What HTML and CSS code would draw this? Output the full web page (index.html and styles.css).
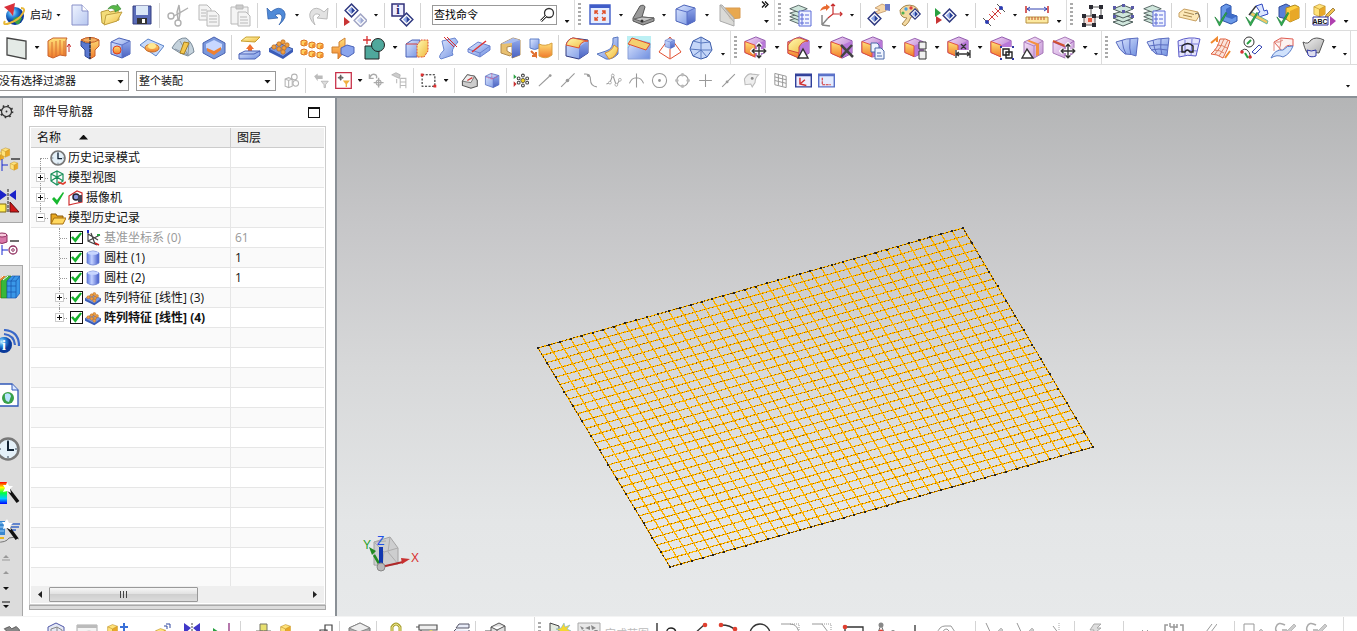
FILE: index.html
```html
<!DOCTYPE html>
<html lang="zh-CN">
<head>
<meta charset="utf-8">
<title>部件导航器</title>
<link rel="stylesheet" href="styles.css">
</head>
<body>
<svg class="sprite" aria-hidden="true">
<defs>
<linearGradient id="gb" x2="1" y2="1"><stop stop-color="#dfe8ff"/><stop offset="1" stop-color="#6f8fe0"/></linearGradient>
<linearGradient id="gd" x2="0" y2="1"><stop stop-color="#8fa6ea"/><stop offset="1" stop-color="#4a62c0"/></linearGradient>
<linearGradient id="go" x2="0" y2="1"><stop stop-color="#ffe27a"/><stop offset="1" stop-color="#f07a2a"/></linearGradient>
<linearGradient id="gy" x2="1" y2="1"><stop stop-color="#fffbb0"/><stop offset="1" stop-color="#f0b840"/></linearGradient>
<linearGradient id="gg" x2="1" y2="1"><stop stop-color="#f4f4f4"/><stop offset="1" stop-color="#a8a8a8"/></linearGradient>
<linearGradient id="gp" x2="1" y2="1"><stop stop-color="#f6dcf8"/><stop offset="1" stop-color="#a868c4"/></linearGradient>
<linearGradient id="gc" x2="1"><stop stop-color="#5a78e0"/><stop offset=".4" stop-color="#c4d2ff"/><stop offset="1" stop-color="#4058c8"/></linearGradient>
<linearGradient id="gr" x2="0" y2="1"><stop stop-color="#f00"/><stop offset=".25" stop-color="#ff0"/><stop offset=".5" stop-color="#0f4"/><stop offset=".75" stop-color="#0cf"/><stop offset="1" stop-color="#00f"/></linearGradient>
<radialGradient id="gl" cx=".35" cy=".3"><stop stop-color="#c8f0ff"/><stop offset=".5" stop-color="#2f8fe0"/><stop offset="1" stop-color="#0a3a9a"/></radialGradient>
</defs>
<symbol id="logo" viewBox="0 0 24 24"><circle cx="13" cy="13" r="9" fill="url(#gl)"/><path d="M11 16q5-4 9-1l-3 6q-4 1-6-5z" fill="#3aa048"/><path d="M3 18q-3 5 5 2 9-3 13-10 3-5-2-5" fill="none" stroke="#e8b838" stroke-width="2"/><path d="M2 4l11-4-2 13-3-4z" fill="#d8303a"/></symbol>
<symbol id="new" viewBox="0 0 24 24"><path d="M4 2h10l6 6v14H4z" fill="url(#gb)" fill-opacity=".5" stroke="#8890c8"/><path d="M14 2v6h6" fill="#fff" stroke="#8890c8"/></symbol>
<symbol id="open" viewBox="0 0 24 24"><path d="M2 9l7-2 2 2 8-2 1 10-14 4-3-1z" fill="#f3dc78" stroke="#b89a3a"/><path d="M7 12l16-3-5 9-13 4z" fill="url(#gy)" stroke="#c0a040"/><path d="M9 6q3-5 9-3V1l4 5-6 3V7q-3-3-7-1z" fill="#58b848" stroke="#2f8030" stroke-width=".6"/></symbol>
<symbol id="save" viewBox="0 0 24 24"><path d="M3 3h18v18H3z" fill="#5a6cb8" stroke="#343f80"/><path d="M6 3h12v9H6z" fill="#dbe8f8"/><path d="M7 15h10v6H7z" fill="#333"/><path d="M12 16h3v4h-3z" fill="#fff"/></symbol>
<symbol id="cut" viewBox="0 0 24 24"><g fill="none" stroke="#b0b0b0" stroke-width="1.4"><circle cx="5" cy="13" r="3"/><circle cx="12" cy="20" r="3"/><path d="M8 13l14-8-10 6M12 17l-1-8 2-7 1 8-1 7" fill="#eee"/></g></symbol>
<symbol id="copy" viewBox="0 0 24 24"><g fill="#f4f4f4" stroke="#b8b8b8"><path d="M2 2h8l4 4v11H2z"/><path d="M10 8h8l4 4v11H10z"/><path d="M4 7h6M4 10h5M4 13h5M12 13h8M12 16h8M12 19h8"/></g></symbol>
<symbol id="paste" viewBox="0 0 24 24"><g fill="#f4f4f4" stroke="#b8b8b8"><path d="M3 4h17v17H3z"/><path d="M8 2h7v4H8z" fill="#ccc"/><path d="M10 9h8l4 4v10H10zM12 14h7M12 17h8M12 20h8"/></g></symbol>
<symbol id="undo" viewBox="0 0 24 24"><path d="M3 5l1 11 10-1-3-3q6-3 7 2 0 4-3 8 9-8 5-14-5-6-13 1z" fill="#4f8ad8" stroke="#2a5aa8" stroke-width=".7"/></symbol>
<symbol id="redo" viewBox="0 0 24 24"><path d="M21 5l-1 11-10-1 3-3q-5-3-7 2 0 4 2 8-8-8-4-14 5-6 13 1z" fill="#e2e2e2" stroke="#bbb"/></symbol>
<symbol id="dia" viewBox="0 0 24 24"><path d="M12 3l9 9-9 9-9-9z" fill="#fff" stroke="#303a80" stroke-width="2"/><path d="M12 7v10l-5-5z" fill="#8fa8e8"/><path d="M12 7v10l5-5z" fill="#27409a"/></symbol>
<symbol id="diad" viewBox="0 0 24 24"><use href="#dia" x="0" y="-1" width="17" height="17"/><use href="#dia" x="9" y="9" width="17" height="17" opacity=".45"/><path d="M1 14v9l6-4z" fill="#c83434"/></symbol>
<symbol id="info" viewBox="0 0 24 24"><path d="M1 1h12v12H1z" fill="#eef" stroke="#30307a" stroke-width="1.5"/><use href="#dia" x="7" y="8" width="17" height="17"/></symbol>
<symbol id="fit" viewBox="0 0 24 24"><path d="M2 2h20v19H2z" fill="#e4ecff" stroke="#3f5cc8" stroke-width="1.4"/><path d="M2 2h20v3H2z" fill="#3f5cc8"/><path d="M10 11L7 8m0 3V8h3M14 11l3-3m-3 0h3v3M10 14l-3 3m0-3v3h3M14 14l3 3m0-3v3h-3" stroke="#e0502a" stroke-width="1.4" fill="none"/></symbol>
<symbol id="seat" viewBox="0 0 24 24"><path d="M2 15L9 3q4-2 5 1l-3 10 12 1v3l-11 4-10-4z" fill="#9a9a9a" stroke="#555"/><path d="M11 14l12 1-11 4-9-3z" fill="#c8c8c8" stroke="#666"/><circle cx="11" cy="18" r="1.5" fill="#333"/></symbol>
<symbol id="cubeb" viewBox="0 0 24 24"><path d="M2 6l8-4 11 3v13l-8 4-11-4z" fill="url(#gb)" stroke="#4a62b8"/><path d="M13 9l8-4v13l-8 4z" fill="url(#gd)"/><path d="M2 6l11 3v13M13 9l8-4" stroke="#5a70c8" fill="none"/></symbol>
<symbol id="sect" viewBox="0 0 24 24"><path d="M8 5h15v10l-10 1z" fill="#e8a850" stroke="#d89a50"/><path d="M3 2l2 0 12 13v8L3 18z" fill="#d4d4d0" fill-opacity=".85" stroke="#aaa"/><path d="M3 2l14 17" stroke="#aaa"/></symbol>
<symbol id="layers" viewBox="0 0 24 24"><g fill="#cfe6dc" stroke="#4a5a58"><path d="M2 19l10-3 10 3-10 4z"/><path d="M2 15l10-3 10 3-10 4z"/><path d="M2 11l10-3 10 3-10 4z"/><path d="M2 6l10-4 10 4-10 4z"/></g></symbol>
<symbol id="layset" viewBox="0 0 24 24"><use href="#layers" width="21" height="22"/><path d="M11 8h12v15H11z" fill="#f0f4ff" stroke="#5a6ad8"/><path d="M13 11h2v2h-2zM13 15h2v2h-2zM13 19h2v2h-2zM17 12h4M17 16h4M17 20h4" fill="none" stroke="#5a6ad8"/></symbol>
<symbol id="laysel" viewBox="0 0 24 24"><use href="#layers" width="24" height="24"/><path d="M2 3h3v3H2zM11 1h3v3h-3zM20 3h3v3h-3zM2 12h3v3H2zM20 12h3v3h-3zM11 7h3v3h-3z" fill="#5a5aa8"/></symbol>
<symbol id="csys" viewBox="0 0 24 24"><path d="M3 22V12M3 22l8 1M3 22l6-7" stroke="#888" stroke-width="1.5" fill="none"/><path d="M14 11V1M14 11h9M14 11l-5 4M12 3l2-2 2 2M21 9l2 2-2 2" stroke="#c83030" stroke-width="1.2" fill="none"/><path d="M1 8q2-5 6-5V1l4 3-4 4V6q-3 0-6 2z" fill="#e86a30"/></symbol>
<symbol id="handd" viewBox="0 0 24 24"><path d="M8 5l7-4 5 2-1 5-9 3-2-2 5-2z" fill="#f8d8a8" stroke="#b88a58" stroke-width=".7"/><path d="M18 1l5 0v7l-5-1z" fill="#6a7ac8"/><use href="#dia" x="-1" y="7" width="17" height="17"/></symbol>
<symbol id="pal" viewBox="0 0 24 24"><path d="M2 7q5-7 14-4 6 3 4 10l-7 1q-2 6-6 9l-3-2 5-6q-7 0-7-8z" fill="#f3d9a0" stroke="#a88850"/><circle cx="8" cy="6" r="1.7" fill="#4aa0e0"/><circle cx="13" cy="5" r="1.7" fill="#e04040"/><circle cx="5" cy="10" r="1.6" fill="#50b050"/><use href="#dia" x="10" y="4" width="14" height="14"/></symbol>
<symbol id="rgd" viewBox="0 0 24 24"><path d="M1 5v9l6-4z" fill="#28a040"/><path d="M2 13v8l6-4z" fill="#c83434"/><use href="#dia" x="7" y="4" width="17" height="17"/></symbol>
<symbol id="dist" viewBox="0 0 24 24"><path d="M4 20L20 4" stroke="#c83030"/><path d="M1 15l8 8M15 1l8 8" stroke="#555"/><path d="M7 11l6 6M10 8l6 6M13 5l6 6" stroke="#d85050"/><circle cx="5" cy="19" r="2" fill="#2a3ab0"/><circle cx="19" cy="5" r="2" fill="#2a3ab0"/></symbol>
<symbol id="ruler" viewBox="0 0 24 24"><path d="M1 3v7M23 3v7" stroke="#c83030" stroke-width="1.5"/><path d="M2 6h20M5 4L2 6l3 2M19 4l3 2-3 2" stroke="#3040b0" fill="none"/><path d="M1 14h22v6H1z" fill="#fce9a0" stroke="#b89040"/><path d="M4 14v3M7 14v3M10 14v3M13 14v3M16 14v3M19 14v3" stroke="#c05030"/></symbol>
<symbol id="nodes" viewBox="0 0 24 24"><path d="M11 4h10v10H11z" fill="none" stroke="#555"/><path d="M4 13h11v9H4z" fill="#f6e0dc" stroke="#555"/><path d="M8 15h4v4H8z" fill="#e85a40"/><path d="M9 2h4v4H9zM19 2h4v4h-4zM19 12h4v4h-4zM2 11h4v4H2zM2 20h4v4H2zM12 20h4v4h-4zM12 11h4v4h-4z" fill="#2a2a32"/></symbol>
<symbol id="tag" viewBox="0 0 24 24"><path d="M1 10l5-4 14 3 1 4-3 5-17-4z" fill="#fce8b8" stroke="#c8a060"/><path d="M6 9l10 2.500M5 12l9 2" stroke="#a88850"/><path d="M17 11q5-4 5 8" stroke="#444" fill="none" stroke-width=".8"/></symbol>
<symbol id="chk" viewBox="0 0 24 24"><path d="M1 13l5 6L13 8l1 1-8 14z" fill="#2fb050" stroke="#1f8038" stroke-width=".8"/></symbol>
<symbol id="okb" viewBox="0 0 24 24"><path d="M7 4l5-3 5 2v8l6 2v5l-6 3-10-4z" fill="#6a98e8" stroke="#2850a8"/><path d="M12 6l5-3v8l6 2-5 3-6-2z" fill="#3f6cc8"/><use href="#chk" y="2" width="22" height="22"/></symbol>
<symbol id="okc" viewBox="0 0 24 24"><path d="M11 3l6-2 2 7 3-1 1 4-9 3-1-4 2-1z" fill="#dce6ff" stroke="#3048c0"/><path d="M7 9l16 9-1 3-17-9z" fill="#f0c860" stroke="#50b0a0" stroke-width=".8"/><path d="M4 12l7-9" stroke="#333" stroke-width="1.4"/><use href="#chk" y="2" width="22" height="22"/></symbol>
<symbol id="oky" viewBox="0 0 24 24"><path d="M3 4l7-3 4 2v14l-11-3z" fill="#5a80d8" stroke="#304a98"/><path d="M10 5l9-3 4 2v11l-9 4-4-3z" fill="#ffd040" stroke="#b08820"/><path d="M14 8l9-4v11l-9 4z" fill="#e8a828"/><use href="#chk" y="2" width="22" height="22"/></symbol>
<symbol id="abc" viewBox="0 0 24 24"><use href="#ycube" x="0" y="0" width="15" height="15"/><path d="M14 12l7-7 2 2-7 7-3 1z" fill="#f0c050" stroke="#806020" stroke-width=".7"/><path d="M1 14h15v8H1z" fill="#fff" stroke="#3030a0"/><path d="M18 13v10l6-5z" fill="#b040b0"/></symbol>
<symbol id="ycube" viewBox="0 0 24 24"><path d="M3 6l9-4 9 3v13l-9 4-9-4z" fill="#ffe27a" stroke="#b88a20"/><path d="M12 10l9-5v13l-9 4z" fill="#e8a828"/><path d="M3 6l9 4 9-5M12 10v12" fill="none" stroke="#b88a20"/></symbol>
<symbol id="sketch" viewBox="0 0 24 24"><path d="M3 2l19 3v18L3 19z" fill="#e4eae6" stroke="#444" stroke-width="1.3"/></symbol>
<symbol id="extr" viewBox="0 0 24 24"><path d="M1 5l5-3h14l-1 2v16l-6-1-7 3-5-2z" fill="url(#go)" stroke="#c8602a"/><path d="M5 6v15M9 5v15M13 4v15M17 5v15" stroke="#d87030"/><path d="M22 16V8m-2 3l2-3 2 3" stroke="#c83030" fill="none"/></symbol>
<symbol id="revo" viewBox="0 0 24 24"><path d="M3 4q9-5 18 0v6l-4 4v6l-5 3z" fill="url(#go)" stroke="#c8602a"/><path d="M3 5q4 3 9 2v16l-5-3v-6l-4-4z" fill="#5a78d0" stroke="#304a98"/><path d="M3 4q9-5 18 0-9 5-18 0z" fill="#f4b060" stroke="#c8602a"/><path d="M12 1v22" stroke="#222" stroke-dasharray="3 1"/></symbol>
<symbol id="hole" viewBox="0 0 24 24"><use href="#cubeb" width="24" height="24"/><circle cx="8" cy="14" r="4" fill="url(#go)" stroke="#e04020"/></symbol>
<symbol id="boss" viewBox="0 0 24 24"><path d="M0 9l8-6 16 7-8 10z" fill="#c8daf8" stroke="#5a82c8"/><ellipse cx="12" cy="12" rx="7" ry="4" fill="url(#go)" stroke="#c8702a"/><ellipse cx="12" cy="10" rx="4" ry="3" fill="#ffe890"/></symbol>
<symbol id="fan" viewBox="0 0 24 24"><path d="M1 12Q7 1 15 2q7 5 8 14l-6 4-8-3z" fill="#c4d2dc" stroke="#7a8a98"/><path d="M4 13l13 6M9 5l8 14M18 5l-1 14" stroke="#8a98a8"/><path d="M13 6l5 1-5 11-4-1z" fill="#f4c850" stroke="#a88020"/></symbol>
<symbol id="pock" viewBox="0 0 24 24"><path d="M1 7l11-6 11 6v10l-11 6-11-6z" fill="#7a98dc" stroke="#4a62b0"/><path d="M4 8l8-4 8 4v4l-8 5-8-5z" fill="#c8d8ff"/><path d="M5 12l7 3 7-4v3l-7 5-7-4z" fill="#f08030"/></symbol>
<symbol id="offs" viewBox="0 0 24 24"><path d="M3 5l5-4h14l-5 5z" fill="url(#gy)" stroke="#c8a030"/><path d="M12 8l4 5h-2v4h-4v-4H8z" fill="#f07030"/><path d="M1 18l6-3h15v4l-5 4H1z" fill="url(#gb)" stroke="#4a62b8"/><path d="M1 18h15l6-3" fill="none" stroke="#4a62b8"/></symbol>
<symbol id="patt" viewBox="0 0 24 24"><path d="M0 13l10-6 14 6-10 8z" fill="#7a98e0" stroke="#3a58a8"/><path d="M0 13v3l14 7 10-7v-3l-10 7z" fill="#3a5cb8"/><g fill="#f0a040" stroke="#b86820" stroke-width=".7"><circle cx="10" cy="8" r="2.200"/><circle cx="14" cy="6" r="2.200"/><circle cx="18" cy="9" r="2.200"/><circle cx="5" cy="11" r="2.200"/><circle cx="10" cy="13" r="2.200"/><circle cx="15" cy="12" r="2.200"/><circle cx="14" cy="16" r="2.200"/></g></symbol>
<symbol id="mc" viewBox="0 0 8 8"><path d="M1 2l3-1 3 1v4L4 7 1 6z" fill="#ffd060" stroke="#d87020"/><path d="M4 4l3-2v4L4 7z" fill="#f09030"/></symbol>
<symbol id="patg" viewBox="0 0 24 24"><use href="#mc" x="0" y="3" width="8" height="8"/><use href="#mc" x="8" y="5" width="8" height="8"/><use href="#mc" x="16" y="6" width="8" height="8"/><use href="#mc" x="0" y="12" width="8" height="8"/><use href="#mc" x="8" y="14" width="8" height="8"/><use href="#mc" x="16" y="15" width="8" height="8"/></symbol>
<symbol id="mirr" viewBox="0 0 24 24"><path d="M1 11h7V6l6-4v13l-7 8v-6H1z" fill="url(#go)" stroke="#d08030"/><path d="M10 12l6-3 7 2v6l-6 4-7-3z" fill="#8aa4ec" stroke="#4a62b8"/></symbol>
<symbol id="unite" viewBox="0 0 24 24"><path d="M3 10h14v13H3z" fill="#4fa89c" stroke="#222"/><circle cx="16" cy="9" r="6.500" fill="#4fa89c" stroke="#222"/><path d="M5 0v8M1 4h8" stroke="#d83030" stroke-width="1.3"/></symbol>
<symbol id="trim" viewBox="0 0 24 24"><path d="M1 8l6-4h8v13l-3 4H1z" fill="url(#gb)" stroke="#4a62b8"/><path d="M12 9l4-5h7v11l-4 6h-7z" fill="url(#gy)" stroke="#e05030" stroke-dasharray="2 1"/><path d="M1 8h11" stroke="#d04040"/></symbol>
<symbol id="tsheet" viewBox="0 0 24 24"><path d="M6 5l13-3 3 4q-8 8-5 13L5 23q-4-2 3-9z" fill="url(#gb)" stroke="#6a86d0"/><path d="M8 1l10 10M11 1l10 10" stroke="#d83030"/></symbol>
<symbol id="split" viewBox="0 0 24 24"><path d="M1 13l10-7 12 4v4l-10 7-12-5z" fill="url(#gb)" stroke="#6a82d0"/><path d="M1 13l12 4 10-7M13 17v4" fill="none" stroke="#6a82d0"/><path d="M5 16L19 5" stroke="#e03030" stroke-width="1.4"/></symbol>
<symbol id="scoop" viewBox="0 0 24 24"><path d="M3 8l12-6 7 2v15l-8 3V10l-5 1v4l5 3-2 2-9-3z" fill="#e8c070" stroke="#b08a50"/><path d="M14 6l8-2v15l-8 3z" fill="url(#gd)"/><path d="M3 8l12-6 7 2-8 3z" fill="#a8bcf0"/></symbol>
<symbol id="thick" viewBox="0 0 24 24"><path d="M1 3h9v9q-4 3-9 0z" fill="url(#gb)" stroke="#6080c8"/><path d="M10 8q6 3 13-1v12q-6 5-13 1z" fill="url(#go)" stroke="#d8a040"/><path d="M2 15l5 5v-4m0 4H3" stroke="#e07030" stroke-width="2" fill="none"/></symbol>
<symbol id="blend" viewBox="0 0 24 24"><path d="M1 10q1-7 7-8l15 2v13l-9 6-13-3z" fill="url(#gb)" stroke="#303a80"/><path d="M14 11l9-6v12l-9 6z" fill="url(#gd)"/><path d="M1 9q2-6 7-7l15 3q-8 0-9 7z" fill="url(#gy)" stroke="#e05030"/></symbol>
<symbol id="fblend" viewBox="0 0 24 24"><path d="M1 18l9-3q8-2 7-13l5-1v17q-6 6-12 5z" fill="url(#gb)" stroke="#5a78c0"/><path d="M9 17q7-2 9-8l4 3q-1 9-9 11z" fill="url(#gy)" stroke="#d89030"/></symbol>
<symbol id="cham" viewBox="0 0 24 24"><path d="M0 0h24v12H0z" fill="#bcf0f4"/><path d="M1 12L6 3l17 4v16H1z" fill="url(#gb)" stroke="#8aa0d8"/><path d="M1 8l4-6 18 6-4 6z" fill="#f4d070" stroke="#e05030"/></symbol>
<symbol id="draft" viewBox="0 0 24 24"><path d="M12 1L1 16l11 7 11-7z" fill="#fff" stroke="#e05030"/><use href="#cubeb" x="6" y="1" width="12" height="13"/><path d="M12 13v9" stroke="#e05030"/></symbol>
<symbol id="poly" viewBox="0 0 24 24"><path d="M12 1l9 5 2 8-5 7-6 2-8-3-3-7 3-8z" fill="#c4d6f8" stroke="#3a5aa8"/><path d="M4 5l8 2 9-1M12 1v22M1 13l11 1 11 0M4 20l8-6 6 7" fill="none" stroke="#5a7ac0"/></symbol>
<symbol id="pcube" viewBox="0 0 24 24"><path d="M1 6l12-5 10 4v13l-10 5-12-5z" fill="url(#gp)" stroke="#8a50a8"/><path d="M12 10l11-5v13l-11 5z" fill="#b878d8"/><path d="M1 6l11 4v13L1 18z" fill="url(#go)" stroke="#e04838"/></symbol>
<symbol id="mv" viewBox="0 0 24 24"><path d="M12 3v18M3 12h18M9 6l3-3 3 3M9 18l3 3 3-3M6 9l-3 3 3 3M18 9l3 3-3 3" fill="none" stroke="#fff" stroke-width="5"/><path d="M12 3v18M3 12h18M9 6l3-3 3 3M9 18l3 3 3-3M6 9l-3 3 3 3M18 9l3 3-3 3" fill="none" stroke="#333" stroke-width="1.8"/></symbol>
<symbol id="p1" viewBox="0 0 24 24"><use href="#pcube" width="22" height="22"/><use href="#mv" x="6" y="6" width="18" height="18"/></symbol>
<symbol id="p2" viewBox="0 0 24 24"><use href="#pcube" width="23" height="23"/><path d="M1 9q5-8 12-7l8 3q-6 0-9 6v6L1 14z" fill="url(#gy)" stroke="#d04838"/><path d="M11 22l5-9 5 9z" fill="#fff" stroke="#333" stroke-width="1.4"/></symbol>
<symbol id="p3" viewBox="0 0 24 24"><use href="#pcube" width="23" height="23"/><path d="M11 9l12 12M22 9L11 21" stroke="#444" stroke-width="2.500"/></symbol>
<symbol id="p4" viewBox="0 0 24 24"><use href="#pcube" width="22" height="22"/><g fill="#eef4ff" stroke="#4a68a8"><path d="M10 7h6l2 2v7h-8z"/><path d="M14 12h6l3 3v8h-9zM16 17h4M16 20h5"/></g></symbol>
<symbol id="p5" viewBox="0 0 24 24"><use href="#pcube" width="20" height="23"/><path d="M15 6h7v7h-7zM15 15h7v8h-7z" fill="#f0f0f0" stroke="#333"/></symbol>
<symbol id="p6" viewBox="0 0 24 24"><use href="#pcube" width="22" height="22"/><path d="M8 14h16v9H8z" fill="#fff"/><path d="M9 14v8M23 14v8M9 18h14M12 16l-3 2 3 2M20 16l3 2-3 2M14 8l5 5M19 8l-5 5" stroke="#333" stroke-width="1.300" fill="none"/></symbol>
<symbol id="p7" viewBox="0 0 24 24"><use href="#pcube" width="22" height="22"/><path d="M11 11h12v12H11z" fill="#fff"/><path d="M13 13h6v6h-6zM16 16h6v6h-6z" fill="none" stroke="#222" stroke-width="1.4"/><path d="M10 10h2v2h-2zM22 10h2v2h-2zM10 22h2v2h-2zM22 22h2v2h-2z" fill="#3038a0"/></symbol>
<symbol id="p8" viewBox="0 0 24 24"><path d="M3 6l11-5 8 4v12l-9 5-10-5z" fill="url(#gp)" fill-opacity=".7" stroke="#a878b8"/><path d="M3 6l10 4 9-5M13 10v12" stroke="#b080c0" fill="none"/><path d="M8 4l8 3 2 1v11l-3 1V9L6 5z" fill="#f49040"/><path d="M1 22l5-9 6 9z" fill="#fff" stroke="#333" stroke-width="1.4"/></symbol>
<symbol id="p9" viewBox="0 0 24 24"><path d="M1 6l12-5 9 4v12l-9 5-12-5z" fill="url(#gp)" fill-opacity=".7" stroke="#a878b8"/><path d="M1 6l12 5 9-6M13 11v11" stroke="#a060b8" fill="none"/><path d="M1 5l12 5" stroke="#d05030" stroke-width="2"/><use href="#mv" x="7" y="6" width="18" height="18"/></symbol>
<symbol id="s1" viewBox="0 0 24 24"><path d="M1 6q10-4 22-4l-2 18q-4-2-11-2Q4 14 1 6z" fill="url(#gb)" stroke="#5a6cc0"/><path d="M7 4q1 9 4 14M15 3q-1 10 1 16" stroke="#5a6cc0" fill="none"/></symbol>
<symbol id="s2" viewBox="0 0 24 24"><use href="#s1" width="24" height="24"/><path d="M3 10q10-2 19-1M5 14q8-2 16 0" stroke="#5a6cc0" fill="none"/></symbol>
<symbol id="s3" viewBox="0 0 24 24"><path d="M1 5q11-5 22-2l-4 17q-8-2-17 1z" fill="#e4e4fc" stroke="#5a5ac8"/><path d="M8 4v16M15 3l-1 17M1 10q10-3 20-2M2 16q9-3 18-1" stroke="#7a7ad8" fill="none"/><path d="M5 16v-6q6-5 11 0v6h-3q-3-4-5 0z" fill="none" stroke="#222" stroke-width="1.4"/></symbol>
<symbol id="s4" viewBox="0 0 24 24"><path d="M12 3q6-1 10 2-2 8-7 17-6-4-12-4 7-6 9-15z" fill="#fbe4dc" stroke="#e06040"/><path d="M16 3q-3 9-9 15M20 4q-4 9-9 16M9 9q6 0 10 3M6 14q6 0 10 3" fill="none" stroke="#e08060"/><path d="M3 7l6-5v4M22 15l-5 7" stroke="#f08a30" stroke-width="2" fill="none"/></symbol>
<symbol id="s5" viewBox="0 0 24 24"><circle cx="10" cy="6" r="5" fill="#fff" stroke="#333"/><path d="M8 8l4-4" stroke="#28a040" stroke-width="2"/><path d="M2 15q7-6 10 7" fill="none" stroke="#444"/><circle cx="3" cy="16" r="1.800" fill="#d83030"/><circle cx="11" cy="21" r="1.800" fill="#d83030"/><path d="M6 17l3 5" stroke="#28a040" stroke-width="2"/><path d="M13 16l7-7 3 2-7 7z" fill="#fff" stroke="#3040b0"/></symbol>
<symbol id="s6" viewBox="0 0 24 24"><path d="M4 6l7-4 12 1v7q-8-3-10 6z" fill="#fdf2f0" stroke="#e05a50"/><path d="M1 22q4-9 12-8 4-5 10-4-3 8-10 11-6-3-12 1z" fill="#d0e2fc" stroke="#5a7cc8"/><path d="M4 6v9M11 2q0 8-2 12M4 6q6 1 9-2" stroke="#e08a80" fill="none"/></symbol>
<symbol id="s7" viewBox="0 0 24 24"><path d="M2 6q5 3 8-2 5-4 13 0l-5 13q-6-2-10 1-3 0-6-12z" fill="url(#gg)" stroke="#555"/><path d="M6 14q4 2 9 0v6q-6 2-8-1z" fill="#dde" stroke="#3038a8"/></symbol>
<symbol id="ga" viewBox="0 0 24 24"><g fill="none" stroke="#b4b4b4" stroke-width="1.5"><path d="M3 10l5-2 5 2v10l-5 2-5-2zM8 12v9M3 10l5 2 5-2"/><circle cx="16" cy="7" r="4"/><circle cx="18" cy="16" r="4"/></g></symbol>
<symbol id="gbk" viewBox="0 0 24 24"><path d="M3 6l5-4v3h7v5H8v3z" fill="#bbb"/><path d="M13 13h10l-4 5v4h-2v-4z" fill="#ddd" stroke="#aaa"/></symbol>
<symbol id="tfil" viewBox="0 0 24 24"><path d="M1 1h22v22H1z" fill="#fff" stroke="#c83048" stroke-width="1.800"/><path d="M8 4v8M4 8h8" stroke="#555" stroke-width="1.500"/><circle cx="8" cy="8" r="2.500" fill="none" stroke="#555"/><path d="M11 12h10l-4 5v4h-2v-4z" fill="#f0b040"/></symbol>
<symbol id="gcr" viewBox="0 0 24 24"><path d="M2 9q3-8 9-5 2 2 1 5M2 3v6h6M15 8v14M8 15h14" fill="none" stroke="#aaa" stroke-width="2"/><circle cx="15" cy="15" r="3.500" fill="none" stroke="#aaa" stroke-width="1.500"/></symbol>
<symbol id="gtr" viewBox="0 0 24 24"><path d="M1 4l6-3 6 3-1 5-5-2z" fill="#ccc" stroke="#aaa"/><path d="M13 9h8v14M13 9v14M13 14h8M13 19h8M8 10v6" fill="none" stroke="#bbb" stroke-width="1.500"/></symbol>
<symbol id="rect" viewBox="0 0 24 24"><path d="M3 4h18v16H3z" fill="none" stroke="#222" stroke-width="1.500" stroke-dasharray="3 2"/><path d="M1 2h4v4H1zM19 18h4v4h-4z" fill="#e03030"/></symbol>
<symbol id="gshell" viewBox="0 0 24 24"><path d="M2 13l7-9 10 2 4 6v8l-9 3-12-4z" fill="#ccc" stroke="#555" stroke-width="1.500"/><path d="M2 13l7-9 10 2-5 9z" fill="#eee" stroke="#555"/><path d="M9 12l7-4" stroke="#d04040" stroke-width="2"/></symbol>
<symbol id="cdot" viewBox="0 0 24 24"><use href="#cubeb" width="24" height="24"/><path d="M11 2v8M3 7l8 3 9-4" stroke="#e05080" fill="none" stroke-dasharray="2 1"/></symbol>
<symbol id="snap" viewBox="0 0 24 24"><path d="M1 3v7l4-3z" fill="#28a040"/><path d="M1 13v8l4-4z" fill="#c83030"/><circle cx="14" cy="12" r="3" fill="#f0d020" stroke="#333"/><g fill="#fff" stroke="#444" stroke-width="1.500"><circle cx="14" cy="5" r="2"/><circle cx="14" cy="19" r="2"/><circle cx="8" cy="9" r="2"/><circle cx="8" cy="15" r="2"/><circle cx="20" cy="9" r="2"/><circle cx="20" cy="15" r="2"/></g></symbol>
<symbol id="n1" viewBox="0 0 24 24"><path d="M4 20L19 6" class="gl"/><circle cx="20" cy="5" r="2" fill="#999"/></symbol>
<symbol id="n2" viewBox="0 0 24 24"><path d="M3 21L22 2" class="gl"/><circle cx="12" cy="12" r="2.500" fill="#999"/></symbol>
<symbol id="n3" viewBox="0 0 24 24"><path d="M3 3q9-1 9 8t9 10" class="gl"/><circle cx="9" cy="5" r="2" fill="#999"/></symbol>
<symbol id="n4" viewBox="0 0 24 24"><path d="M2 17l5-2 4-11 5 15 5-8" class="gl"/><g fill="#fff" stroke="#999"><circle cx="7" cy="15" r="2"/><circle cx="11" cy="5" r="2"/><circle cx="16" cy="18" r="2"/><circle cx="21" cy="11" r="2"/></g></symbol>
<symbol id="n5" viewBox="0 0 24 24"><path d="M2 16q3-8 10-8t10 8M12 2v20" class="gl"/></symbol>
<symbol id="n6" viewBox="0 0 24 24"><circle cx="12" cy="12" r="10" class="gl"/><circle cx="12" cy="12" r="2" fill="#999"/></symbol>
<symbol id="n7" viewBox="0 0 24 24"><circle cx="12" cy="12" r="8" class="gl"/><g fill="#bbb"><circle cx="12" cy="4" r="2.500"/><circle cx="12" cy="20" r="2.500"/><circle cx="4" cy="12" r="2.500"/><circle cx="20" cy="12" r="2.500"/></g></symbol>
<symbol id="n8" viewBox="0 0 24 24"><path d="M12 3v18M3 12h18" class="gl"/></symbol>
<symbol id="n9" viewBox="0 0 24 24"><path d="M3 21L21 3" class="gl"/><circle cx="10" cy="14" r="2" fill="#999"/></symbol>
<symbol id="n10" viewBox="0 0 24 24"><path d="M2 10q5-9 11-7l9 1q-5 4-5 11l-4 6-2-4-8 1z" fill="#eee" stroke="#bbb" stroke-width="1.500"/><circle cx="13" cy="9" r="2" fill="#888"/></symbol>
<symbol id="grid" viewBox="0 0 24 24"><path d="M4 2l16 4v16L4 18zM9 3v16M15 5v15M4 7l16 4M4 12l16 4" fill="none" stroke="#999" stroke-width="1.400"/></symbol>
<symbol id="v1" viewBox="0 0 24 24"><path d="M1 3h22v18H1z" fill="#eef" stroke="#30409a" stroke-width="2"/><path d="M1 3h22v3H1z" fill="#30409a"/><path d="M7 8v9l9 2M7 17l7-6" stroke="#d03030" stroke-width="2" fill="none"/></symbol>
<symbol id="v2" viewBox="0 0 24 24"><path d="M1 3h22v18H1z" fill="#e4ecff" stroke="#5a70c8" stroke-width="2"/><path d="M1 3h22v3H1z" fill="#5a70c8"/><path d="M6 8v10h12" stroke="#d03030" stroke-width="1.500" fill="none" stroke-dasharray="4 1"/></symbol>
<symbol id="clock" viewBox="0 0 24 24"><circle cx="12" cy="12" r="10.500" fill="#e4f0f8" stroke="#777" stroke-width="2.500"/><path d="M12 4v9h6" fill="none" stroke="#123" stroke-width="2"/><path d="M12 3v2M12 19v2M3 12h2M19 12h2" stroke="#345"/></symbol>
<symbol id="gear" viewBox="0 0 24 24"><circle cx="12" cy="12" r="8" fill="none" stroke="#333" stroke-width="2"/><circle cx="12" cy="12" r="9.500" fill="none" stroke="#333" stroke-width="3" stroke-dasharray="2.500 5"/><circle cx="12" cy="12" r="1.500" fill="#333"/></symbol>
<symbol id="asm" viewBox="0 0 24 24"><use href="#ycube" x="-1" y="4" width="10" height="10"/><use href="#ycube" x="4" y="0" width="11" height="11"/><use href="#ycube" x="13" y="14" width="10" height="10"/><path d="M15 12h9" stroke="#222" stroke-width="1.300"/><path d="M6 12v12M6 18h6" stroke="#1a2ad0" fill="none"/></symbol>
<symbol id="cons" viewBox="0 0 24 24"><path d="M4 1v10l7-5zM20 1v10l-7-5z" fill="#1a22c8"/><path d="M12 0v24" stroke="#222" stroke-dasharray="3 1"/><path d="M0 15h10v8H0z" fill="#ffec50" stroke="#806810"/><path d="M14 13l9 10h-9z" fill="#d01818" stroke="#601010"/></symbol>
<symbol id="pnav" viewBox="0 0 24 24"><path d="M1 3q5-3 10 0v7q-5 3-10 0z" fill="#d878a8" stroke="#903060"/><ellipse cx="6" cy="3" rx="5" ry="2" fill="#f8c8dc" stroke="#903060"/><path d="M14 9h9" stroke="#222" stroke-width="1.300"/><path d="M6 13v10M6 18h6" stroke="#1a2ad0" fill="none"/><circle cx="17" cy="18" r="4" fill="#fff" stroke="#903060" stroke-width="1.300"/><circle cx="17" cy="18" r="1.300" fill="none" stroke="#903060"/></symbol>
<symbol id="books" viewBox="0 0 24 24"><path d="M0 6l6-5h4L5 6v17H0z" fill="#e88030"/><path d="M5 6l6-5h4l-4 5v17H5z" fill="#38b838" stroke="#187818" stroke-width=".6"/><path d="M11 6l5-5h8v17l-4 5h-9z" fill="#3a98e8" stroke="#1a58b0" stroke-width=".7"/><path d="M11 6h9l4-5M20 6v17M15 6v17M15 6l4-5M11 11h9M11 17h9" fill="none" stroke="#1a58b0" stroke-width=".8"/><path d="M2 5l5-4M7 5l5-4" stroke="#fff"/></symbol>
<symbol id="inet" viewBox="0 0 24 24"><path d="M8 1q15 1 15 16M8 5q10 1 11 11M8 9q6 1 7 6" fill="none" stroke="#3a68c8" stroke-width="2.200"/><circle cx="8" cy="16" r="8" fill="url(#gl)"/></symbol>
<symbol id="doc" viewBox="0 0 24 24"><path d="M2 1h14l6 6v16H2z" fill="#fff" stroke="#3058b8" stroke-width="1.300"/><path d="M16 1v6h6" fill="#dce8ff" stroke="#3058b8"/><circle cx="12" cy="15" r="6" fill="#38a048"/><path d="M9 11q5-2 6 2l-2 6q-5-1-4-8z" fill="#b8e4ff"/></symbol>
<symbol id="rain" viewBox="0 0 24 24"><path d="M0 1h11v22H0z" fill="url(#gr)"/><path d="M12 8l10 13" stroke="#111" stroke-width="3.500"/><path d="M11 1l2 4 4 0-3 3 1 4-4-2-4 1 2-4-2-3h3z" fill="#fff"/></symbol>
<symbol id="wand" viewBox="0 0 24 24"><path d="M0 2h9v14H0z" fill="#3a88d0"/><path d="M0 4h8M0 8h8M0 12h8" stroke="#9ad0f8"/><path d="M13 5h11M15 8h8M15 11h5" stroke="#3a68c8" stroke-width="1.500"/><path d="M0 19h8" stroke="#e8b820" stroke-width="2"/><path d="M0 23q10 1 13-4 5-2 10 1" stroke="#777" fill="none"/><path d="M12 8l9 12" stroke="#111" stroke-width="3.500"/><path d="M11 0l2 4h4l-3 3 1 4-4-2-4 1 1-4-2-3h3z" fill="#fff"/></symbol>
<symbol id="mview" viewBox="0 0 16 16"><path d="M1 4l6-3 6 3v7l-6 4-6-4zM1 4l6 3 6-3M7 1v14M1 11l6-4 6 4" fill="none" stroke="#18905a" stroke-width="1.200"/><path d="M8 12l5 2 3-2" stroke="#e04030" stroke-width="1.800" fill="none"/></symbol>
<symbol id="tick" viewBox="0 0 16 16"><path d="M2 9l2-2 3 3 6-8 1 1-7 12z" fill="#18b830"/></symbol>
<symbol id="cam" viewBox="0 0 16 16"><path d="M1 6l8-5 5 2v9l-9 2-4 1z" fill="#fff" stroke="#d03030" stroke-width="1.200"/><circle cx="8" cy="7" r="3" fill="#8a9ae0" stroke="#223" stroke-width="1.500"/><path d="M10 5h4v7h-4z" fill="#445"/></symbol>
<symbol id="fold" viewBox="0 0 16 16"><path d="M1 14V4h5l1 2h6v2" fill="#e8a820" stroke="#8a5808"/><path d="M1 14l3-6h12l-3 6z" fill="#ffd860" stroke="#a87010"/></symbol>
<symbol id="dcs" viewBox="0 0 16 16"><path d="M3 1v10l9 4M3 11l12-6M3 4l10 6M6 3l4 11" fill="none" stroke="#444" stroke-width="1.200"/><path d="M2 0h2v3H2z" fill="#2030c8"/><path d="M12 4h3v2h-3z" fill="#28a040"/><path d="M10 13l4 2" stroke="#d02020" stroke-width="1.500"/></symbol>
<symbol id="cyl" viewBox="0 0 16 16"><path d="M2 3q6-4 12 0v10q-6 4-12 0z" fill="url(#gc)" stroke="#6a80d0" stroke-width=".8"/><ellipse cx="8" cy="3" rx="5.500" ry="1.800" fill="#c8d6ff"/></symbol>
<symbol id="b1" viewBox="0 0 24 24"><path d="M3 5l7-3 3 3 6-3 4 4 1 9h-6l-3-5-5 5H3l3-7z" fill="#888" stroke="#444"/></symbol>
<symbol id="b2" viewBox="0 0 24 24"><path d="M4 5l8-4 8 4v14H4z" fill="#e4e8f4" stroke="#5058a8"/><path d="M7 7l6-2 5 3v10H7zM13 5v14M7 12h11" fill="none" stroke="#888"/></symbol>
<symbol id="b3" viewBox="0 0 24 24"><path d="M2 3h20v18H2z" fill="#f4f4f4" stroke="#aaa"/><path d="M2 3h20v3H2z" fill="#bbb"/><path d="M6 11l8-3 5 2v10H6z" fill="#ddd"/></symbol>
<symbol id="b4" viewBox="0 0 24 24"><use href="#ycube" x="0" y="1" width="13" height="14"/><path d="M18 1v8M14 5h8" stroke="#3a70d8" stroke-width="2"/></symbol>
<symbol id="b5" viewBox="0 0 24 24"><use href="#ycube" x="5" y="5" width="13" height="14"/><path d="M15 4h3v3M17 2h4v4" stroke="#3048a0" fill="none"/></symbol>
<symbol id="b6" viewBox="0 0 24 24"><path d="M4 1v11l7-6zM20 1v11l-7-6z" fill="#4038c8"/><path d="M12 1v12" stroke="#444" stroke-dasharray="2 1"/></symbol>
<symbol id="b7" viewBox="0 0 24 24"><path d="M2 6v9l6-5z" fill="#28a040"/><path d="M18 1v9M12 10h12" stroke="#903080" stroke-width="1.300"/></symbol>
<symbol id="b8" viewBox="0 0 24 24"><path d="M12 2h7v7h-7zM8 9h7v7H8zM16 9h7v7h-7z" fill="#e8e070" stroke="#776"/></symbol>
<symbol id="b9" viewBox="0 0 24 24"><use href="#ycube" x="0" y="1" width="13" height="14"/></symbol>
<symbol id="b10" viewBox="0 0 24 24"><path d="M15 3h7v7h-7zM10 8h7v7h-7z" fill="#fff" stroke="#444" stroke-width="1.200"/></symbol>
<symbol id="b11" viewBox="0 0 24 24"><path d="M2 6l11-5 10 5v11H2z" fill="#aaa" stroke="#777"/><path d="M2 6l11-5 10 5-11 4z" fill="#eee" stroke="#888"/></symbol>
<symbol id="b12" viewBox="0 0 24 24"><path d="M8 12V5q4-6 8 0v9" fill="none" stroke="#a8a030" stroke-width="3"/><path d="M8 12V5q4-6 8 0v9" fill="none" stroke="#f0e890"/></symbol>
<symbol id="b13" viewBox="0 0 24 24"><path d="M4 3h18v5H4zM1 5h3M6 8v6" fill="#eee" stroke="#555" stroke-width="1.200"/><circle cx="16" cy="10" r="2" fill="#e8d860"/></symbol>
<symbol id="b14" viewBox="0 0 24 24"><path d="M13 2h10v4H10zM10 7l-6 6h19V8" fill="#e8ecf8" stroke="#556"/></symbol>
<symbol id="b15" viewBox="0 0 24 24"><path d="M8 5l8-4 6 3v8l-8 3-6-3zM2 9h6v7H2zM8 5l6 3 8-4M14 8v7" fill="#ddd" stroke="#555"/></symbol>
<symbol id="k1" viewBox="0 0 24 24"><path d="M2 1l9 3v15l-9-4z" fill="#e4eae0" stroke="#444"/><path d="M16 1l1 4 5-2-3 4 4 2-5 1v4l-3-3-4 2 1-4-4-2 5-1z" fill="#f4d830" stroke="#78b0d0" stroke-width=".6"/></symbol>
<symbol id="k2" viewBox="0 0 24 24"><path d="M1 1h22v20H1z" fill="#e8e8e8" stroke="#aaa"/><path d="M3 4l4 2-2 2zM8 6l5-2v4zM14 3l5 3-4 2zM4 10l3-2 2 3zM11 11l4-2 2 3zM17 8h4l-2 3z" fill="#888"/></symbol>
<symbol id="k3" viewBox="0 0 24 24"><path d="M2 1v20" stroke="#222" stroke-width="1.300"/><path d="M12 12q-1-6 4-6t5 6" fill="none" stroke="#222" stroke-width="1.300"/></symbol>
<symbol id="k4" viewBox="0 0 24 24"><path d="M7 13L18 3" stroke="#333" stroke-width="1.300"/><circle cx="19" cy="3" r="2.300" fill="#e04030"/></symbol>
<symbol id="k5" viewBox="0 0 24 24"><path d="M4 3q10 0 14 5" stroke="#333" fill="none" stroke-width="1.300"/><circle cx="4" cy="3" r="2.300" fill="#e04030"/><circle cx="18" cy="7" r="2.300" fill="#e04030"/></symbol>
<symbol id="k6" viewBox="0 0 24 24"><circle cx="12" cy="12" r="10" fill="none" stroke="#333" stroke-width="1.300"/></symbol>
<symbol id="k7" viewBox="0 0 24 24"><path d="M2 2h9q9 0 9 12" fill="none" stroke="#999"/><path d="M11 2h9v11" fill="none" stroke="#999" stroke-dasharray="1 1"/></symbol>
<symbol id="k8" viewBox="0 0 24 24"><path d="M2 2h10l9 12" fill="none" stroke="#999"/><path d="M12 2h9v11" fill="none" stroke="#999" stroke-dasharray="1 1"/></symbol>
<symbol id="k9" viewBox="0 0 24 24"><path d="M4 5h18v14H4z" fill="none" stroke="#333" stroke-width="1.300"/><circle cx="4" cy="5" r="2.300" fill="#e04030"/></symbol>
<symbol id="k10" viewBox="0 0 24 24"><path d="M9 3l-4 10M9 3l4 10" stroke="#666"/><circle cx="9" cy="3" r="2.500" fill="#888"/><circle cx="9" cy="10" r="2.500" fill="#e04030"/><circle cx="21" cy="10" r="2" fill="#888"/></symbol>
<symbol id="k11" viewBox="0 0 24 24"><path d="M12 3v20M3 12h18" stroke="#333" stroke-width="1.300"/></symbol>
<symbol id="k12" viewBox="0 0 24 24"><path d="M3 12q2-8 8-8h6l4 6M8 12q1-5 5-5l4 4" fill="none" stroke="#999"/></symbol>
<symbol id="k13" viewBox="0 0 24 24"><path d="M3 1l6 13" stroke="#999"/><path d="M12 12l6-6 2 2-5 5z" fill="#ccc" stroke="#bbb"/></symbol>
<symbol id="k14" viewBox="0 0 24 24"><path d="M14 1v13" stroke="#aaa" stroke-dasharray="1 1"/><path d="M8 4l6 8" stroke="#999"/></symbol>
<symbol id="k15" viewBox="0 0 24 24"><path d="M12 2h7l-4 4h4l-9 7 2-5H8z" fill="#ddd" stroke="#aaa"/></symbol>
<symbol id="k16" viewBox="0 0 24 24"><path d="M8 12l4-4M13 12l4-4" stroke="#999"/></symbol>
<symbol id="k17" viewBox="0 0 24 24"><path d="M3 14V3h3M21 14V3h-3M8 5V1M12 10V2M15 6V2M8 5h7" fill="none" stroke="#999" stroke-width="1.500"/></symbol>
<symbol id="k18" viewBox="0 0 24 24"><path d="M10 14l9-12M15 14l9-12M1 12l4-2" stroke="#999"/></symbol>
<symbol id="k19" viewBox="0 0 24 24"><path d="M2 2h10v12H2z" fill="none" stroke="#999"/><path d="M14 12l5-5 2 2-4 4z" fill="#ccc" stroke="#bbb"/></symbol>
<symbol id="k20" viewBox="0 0 24 24"><path d="M12 3Q5-1 3 5t7 6M9 8h5" fill="none" stroke="#aaa" stroke-width="1.500"/><path d="M14 9l7-7 2 2-7 7z" fill="#ccc" stroke="#bbb"/></symbol>
</svg>

<header class="toolbars">
<div class="bar">
<div class="group">
<button class="start" aria-label="启动"><svg class="ic"><use href="#logo"/></svg><span>启动</span><i class="tri"></i></button>
<button class="tool" aria-label="New"><svg class="ic"><use href="#new"/></svg></button>
<button class="tool" aria-label="Open"><svg class="ic"><use href="#open"/></svg></button>
<button class="tool" aria-label="Save"><svg class="ic"><use href="#save"/></svg></button>
<i class="sep"></i>
<button class="tool" aria-label="Cut"><svg class="ic"><use href="#cut"/></svg></button>
<button class="tool" aria-label="Copy"><svg class="ic"><use href="#copy"/></svg></button>
<button class="tool" aria-label="Paste"><svg class="ic"><use href="#paste"/></svg></button>
<i class="sep"></i>
<button class="tool" aria-label="Undo"><svg class="ic"><use href="#undo"/></svg></button>
<button class="more" aria-label="Undo list"></button>
<button class="tool" aria-label="Redo"><svg class="ic"><use href="#redo"/></svg></button>
<i class="sep"></i>
<button class="tool" aria-label="Repeat"><svg class="ic"><use href="#diad"/></svg></button>
<button class="more" aria-label="Repeat list"></button>
<i class="sep"></i>
<button class="tool" aria-label="Command info"><svg class="ic" viewBox="0 0 24 24"><use href="#info" width="24" height="24"/><text x="7" y="11" class="glyph-i">i</text></svg></button>
<i class="sep"></i>
<div class="search"><input type="text" value="查找命令" aria-label="查找命令"><svg class="lens" viewBox="0 0 16 16"><circle cx="10" cy="6" r="4.500" fill="#fff" stroke="#333" stroke-width="1.300"/><path d="M7 9l-5 5" stroke="#333" stroke-width="2.500"/><path d="M7 9l-5 5" stroke="#fff"/></svg></div>
<button class="more over" aria-label="Options"></button>
</div>
<div class="group grip">
<button class="tool" aria-label="Fit"><svg class="ic"><use href="#fit"/></svg></button><button class="more" aria-label="More"></button>
<button class="tool" aria-label="Orient"><svg class="ic"><use href="#seat"/></svg></button><button class="more" aria-label="More"></button>
<button class="tool" aria-label="Shaded"><svg class="ic"><use href="#cubeb"/></svg></button><button class="more" aria-label="More"></button>
<button class="tool" aria-label="Section"><svg class="ic"><use href="#sect"/></svg></button>
<button class="more over wide" aria-label="Options"><svg class="chev" viewBox="0 0 8 6"><path d="M1 0l3 3-3 3M4 0l3 3-3 3" fill="none" stroke="#111" stroke-width="1.300"/></svg></button>
</div>
<div class="group grip">
<button class="tool" aria-label="Layer settings"><svg class="ic"><use href="#layset"/></svg></button>
<button class="tool" aria-label="WCS"><svg class="ic"><use href="#csys"/></svg></button><button class="more" aria-label="More"></button>
<i class="sep"></i>
<button class="tool" aria-label="Show"><svg class="ic"><use href="#handd"/></svg></button>
<button class="tool" aria-label="Colour"><svg class="ic"><use href="#pal"/></svg></button>
<i class="sep"></i>
<button class="tool" aria-label="Hide"><svg class="ic"><use href="#rgd"/></svg></button><button class="more" aria-label="More"></button>
<i class="sep"></i>
<button class="tool" aria-label="Distance"><svg class="ic"><use href="#dist"/></svg></button><button class="more" aria-label="More"></button>
<button class="tool" aria-label="Measure"><svg class="ic"><use href="#ruler"/></svg></button>
<button class="more over" aria-label="Options"></button>
</div>
<div class="group grip last">
<button class="tool" aria-label="Nodes"><svg class="ic"><use href="#nodes"/></svg></button>
<button class="tool" aria-label="Layers"><svg class="ic"><use href="#laysel"/></svg></button>
<button class="tool" aria-label="Layer list"><svg class="ic"><use href="#layset"/></svg></button>
<i class="sep"></i>
<button class="tool" aria-label="Tag"><svg class="ic"><use href="#tag"/></svg></button>
<i class="sep"></i>
<button class="tool" aria-label="Check part"><svg class="ic"><use href="#okb"/></svg></button>
<button class="tool" aria-label="Check size"><svg class="ic"><use href="#okc"/></svg></button>
<button class="tool" aria-label="Check assembly"><svg class="ic"><use href="#oky"/></svg></button>
<i class="sep"></i>
<button class="tool" aria-label="Annotate"><svg class="ic" viewBox="0 0 24 24"><use href="#abc" width="24" height="24"/><text x="8" y="21" class="glyph-abc">ABC</text></svg></button>
<button class="more over" aria-label="Options"></button>
</div>
</div>

<div class="bar second">
<div class="group">
<button class="tool" aria-label="Sketch"><svg class="ic"><use href="#sketch"/></svg></button><button class="more" aria-label="More"></button>
<button class="tool" aria-label="Extrude"><svg class="ic"><use href="#extr"/></svg></button>
<button class="tool" aria-label="Revolve"><svg class="ic"><use href="#revo"/></svg></button>
<button class="tool" aria-label="Hole"><svg class="ic"><use href="#hole"/></svg></button>
<button class="tool" aria-label="Boss"><svg class="ic"><use href="#boss"/></svg></button>
<button class="tool" aria-label="Rib"><svg class="ic"><use href="#fan"/></svg></button>
<button class="tool" aria-label="Pocket"><svg class="ic"><use href="#pock"/></svg></button>
<i class="sep"></i>
<button class="tool" aria-label="Offset"><svg class="ic"><use href="#offs"/></svg></button>
<button class="tool" aria-label="Pattern feature"><svg class="ic"><use href="#patt"/></svg></button>
<button class="tool" aria-label="Pattern geometry"><svg class="ic"><use href="#patg"/></svg></button>
<button class="tool" aria-label="Mirror"><svg class="ic"><use href="#mirr"/></svg></button>
<button class="tool" aria-label="Unite"><svg class="ic"><use href="#unite"/></svg></button><button class="more" aria-label="More"></button>
<button class="tool" aria-label="Trim body"><svg class="ic"><use href="#trim"/></svg></button>
<button class="tool" aria-label="Trim sheet"><svg class="ic"><use href="#tsheet"/></svg></button>
<button class="tool" aria-label="Split"><svg class="ic"><use href="#split"/></svg></button>
<button class="tool" aria-label="Shell"><svg class="ic"><use href="#scoop"/></svg></button>
<button class="tool" aria-label="Thicken"><svg class="ic"><use href="#thick"/></svg></button>
<i class="sep"></i>
<button class="tool" aria-label="Edge blend"><svg class="ic"><use href="#blend"/></svg></button>
<button class="tool" aria-label="Face blend"><svg class="ic"><use href="#fblend"/></svg></button>
<button class="tool" aria-label="Chamfer"><svg class="ic"><use href="#cham"/></svg></button>
<button class="tool" aria-label="Draft"><svg class="ic"><use href="#draft"/></svg></button>
<button class="tool" aria-label="Body"><svg class="ic"><use href="#poly"/></svg></button>
<button class="more over" aria-label="Options"></button>
</div>
<div class="group grip">
<button class="tool" aria-label="Move face"><svg class="ic"><use href="#p1"/></svg></button><button class="more" aria-label="More"></button>
<button class="tool" aria-label="Resize blend"><svg class="ic"><use href="#p2"/></svg></button><button class="more" aria-label="More"></button>
<button class="tool" aria-label="Delete face"><svg class="ic"><use href="#p3"/></svg></button>
<button class="tool" aria-label="Copy face"><svg class="ic"><use href="#p4"/></svg></button><button class="more" aria-label="More"></button>
<button class="tool" aria-label="Make coplanar"><svg class="ic"><use href="#p5"/></svg></button><button class="more" aria-label="More"></button>
<button class="tool" aria-label="Linear dimension"><svg class="ic"><use href="#p6"/></svg></button><button class="more" aria-label="More"></button>
<button class="tool" aria-label="Group face"><svg class="ic"><use href="#p7"/></svg></button>
<button class="tool" aria-label="Section edit"><svg class="ic"><use href="#p8"/></svg></button>
<button class="tool" aria-label="Move edge"><svg class="ic"><use href="#p9"/></svg></button><button class="more" aria-label="More"></button>
<button class="more over slim" aria-label="Options"></button>
</div>
<div class="group grip">
<button class="tool" aria-label="Ruled"><svg class="ic"><use href="#s1"/></svg></button>
<button class="tool" aria-label="Mesh"><svg class="ic"><use href="#s2"/></svg></button>
<button class="tool" aria-label="N-sided"><svg class="ic"><use href="#s3"/></svg></button>
<button class="tool" aria-label="Swept"><svg class="ic"><use href="#s4"/></svg></button>
<button class="tool" aria-label="Section surface"><svg class="ic"><use href="#s5"/></svg></button>
<button class="tool" aria-label="Bridge"><svg class="ic"><use href="#s6"/></svg></button>
<button class="tool" aria-label="Transition"><svg class="ic"><use href="#s7"/></svg></button><button class="more" aria-label="More"></button>
<button class="more over slim" aria-label="Options"></button>
</div>
</div>

<div class="bar third">
<div class="group wide">
<div class="pick clipped"><select aria-label="选择过滤器"><option>没有选择过滤器</option></select><i class="tri big"></i></div>
<div class="pick"><select aria-label="选择范围"><option>整个装配</option></select><i class="tri big"></i></div>
<button class="mini" aria-label="Find"><svg class="ic"><use href="#ga"/></svg></button>
<i class="sep"></i>
<button class="mini" aria-label="Reset"><svg class="ic"><use href="#gbk"/></svg></button>
<button class="mini" aria-label="Type filter"><svg class="ic"><use href="#tfil"/></svg></button><button class="more narrow" aria-label="More"></button>
<button class="mini" aria-label="Deselect"><svg class="ic"><use href="#gcr"/></svg></button>
<button class="mini" aria-label="Find in tree"><svg class="ic"><use href="#gtr"/></svg></button>
<i class="sep"></i>
<button class="mini" aria-label="Rectangle"><svg class="ic"><use href="#rect"/></svg></button><button class="more" aria-label="More"></button>
<i class="sep"></i>
<button class="mini" aria-label="Highlight"><svg class="ic"><use href="#gshell"/></svg></button>
<button class="mini" aria-label="Hidden edges"><svg class="ic"><use href="#cdot"/></svg></button>
<i class="sep"></i>
<button class="mini" aria-label="Snap"><svg class="ic"><use href="#snap"/></svg></button>
<button class="mini" aria-label="End point"><svg class="ic"><use href="#n1"/></svg></button>
<button class="mini" aria-label="Mid point"><svg class="ic"><use href="#n2"/></svg></button>
<button class="mini" aria-label="Control point"><svg class="ic"><use href="#n3"/></svg></button>
<button class="mini" aria-label="Pole"><svg class="ic"><use href="#n4"/></svg></button>
<button class="mini" aria-label="Intersection"><svg class="ic"><use href="#n5"/></svg></button>
<button class="mini" aria-label="Arc centre"><svg class="ic"><use href="#n6"/></svg></button>
<button class="mini" aria-label="Quadrant"><svg class="ic"><use href="#n7"/></svg></button>
<button class="mini" aria-label="Existing point"><svg class="ic"><use href="#n8"/></svg></button>
<button class="mini" aria-label="Point on curve"><svg class="ic"><use href="#n9"/></svg></button>
<button class="mini" aria-label="Point on face"><svg class="ic"><use href="#n10"/></svg></button>
<i class="sep"></i>
<button class="mini" aria-label="Grid"><svg class="ic"><use href="#grid"/></svg></button>
<button class="mini" aria-label="View axes"><svg class="ic"><use href="#v1"/></svg></button>
<button class="mini" aria-label="View plane"><svg class="ic"><use href="#v2"/></svg></button>
<button class="more over end" aria-label="Options"></button>
</div>
</div>
</header>

<main class="work">
<nav class="rail" aria-label="Resource bar">
<div class="tabs">
<button class="tab small" aria-label="Settings"><svg><use href="#gear"/></svg></button>
<button class="tab first" aria-label="Assembly"><svg><use href="#asm"/></svg></button>
<button class="tab" aria-label="Constraints"><svg><use href="#cons"/></svg></button>
</div>
<div class="tabs on"><button class="tab" aria-label="部件导航器"><svg><use href="#pnav"/></svg></button></div>
<div class="tabs grow">
<button class="tab library" aria-label="Library"><svg><use href="#books"/></svg></button>
<button class="tab tall" aria-label="Web"><svg viewBox="0 0 24 24"><use href="#inet" width="24" height="24"/><text x="8" y="21" class="glyph-w">i</text></svg></button>
<button class="tab tall" aria-label="Document"><svg><use href="#doc"/></svg></button>
<button class="tab tall" aria-label="History"><svg><use href="#clock"/></svg></button>
<button class="tab low" aria-label="Visual"><svg><use href="#rain"/></svg></button>
<button class="tab" aria-label="Process"><svg><use href="#wand"/></svg></button>
<svg class="arrows" viewBox="0 0 12 62"><path d="M3 6l3-3 3 3zM3 22l3-3 3 3z" fill="#999"/><path d="M2 8h8" stroke="#999"/><path d="M3 35l3 3 3-3zM3 53l3 3 3-3z" fill="#111"/><path d="M2 50h8" stroke="#111"/></svg>
</div>
</nav>

<section class="panel">
<div class="panel-head"><h1>部件导航器</h1><button class="max" aria-label="Maximize"></button></div>
<div class="frame">
<div class="rows">
<table class="tree">
<thead><tr><th>名称<i class="up"></i></th><th>图层</th></tr></thead>
<tbody>
<tr><td><div class="node"><span class="twist from"></span><svg><use href="#clock"/></svg><span>历史记录模式</span></div></td><td></td></tr>
<tr><td><div class="node"><span class="twist"><button class="plus" aria-label="Expand"></button></span><svg><use href="#mview"/></svg><span>模型视图</span></div></td><td></td></tr>
<tr><td><div class="node"><span class="twist"><button class="plus" aria-label="Expand"></button></span><svg><use href="#tick"/></svg><svg><use href="#cam"/></svg><span>摄像机</span></div></td><td></td></tr>
<tr><td><div class="node"><span class="twist to"><button aria-label="Collapse"></button></span><svg><use href="#fold"/></svg><span>模型历史记录</span></div></td><td></td></tr>
<tr class="dim"><td><div class="node sub"><span class="twist"></span><input type="checkbox" id="f0" checked><svg><use href="#dcs"/></svg><label for="f0">基准坐标系 (0)</label></div></td><td>61</td></tr>
<tr><td><div class="node sub"><span class="twist"></span><input type="checkbox" id="f1" checked><svg><use href="#cyl"/></svg><label for="f1">圆柱 (1)</label></div></td><td>1</td></tr>
<tr><td><div class="node sub"><span class="twist"></span><input type="checkbox" id="f2" checked><svg><use href="#cyl"/></svg><label for="f2">圆柱 (2)</label></div></td><td>1</td></tr>
<tr><td><div class="node sub"><span class="twist"><button class="plus" aria-label="Expand"></button></span><input type="checkbox" id="f3" checked><svg><use href="#patt"/></svg><label for="f3">阵列特征 [线性] (3)</label></div></td><td></td></tr>
<tr class="bold"><td><div class="node sub"><span class="twist to"><button class="plus" aria-label="Expand"></button></span><input type="checkbox" id="f4" checked><svg><use href="#patt"/></svg><label for="f4">阵列特征 [线性] (4)</label></div></td><td></td></tr>
<tr><td></td><td></td></tr><tr><td></td><td></td></tr><tr><td></td><td></td></tr><tr><td></td><td></td></tr><tr><td></td><td></td></tr><tr><td></td><td></td></tr><tr><td></td><td></td></tr><tr><td></td><td></td></tr><tr><td></td><td></td></tr><tr><td></td><td></td></tr><tr><td></td><td></td></tr><tr><td></td><td></td></tr><tr><td></td><td></td></tr>
</tbody>
</table>
</div>
<div class="scroll"><button class="left" aria-label="Scroll left"></button><div class="track"><div class="thumb"><i></i><i></i><i></i></div></div><button class="right" aria-label="Scroll right"></button></div>
</div>
<div class="foot"></div>
</section>

<section class="view" aria-label="Graphics window">
<svg class="scene">
<g transform="translate(-337 -98)">
<path id="rows" class="mesh"/><path id="cols" class="mesh"/>
<path id="rowdash" class="mesh-dark"/><path id="coldash" class="mesh-dark faint"/>
<path class="mesh-edge" d="M538 348L963 228 1093 447 670 567z"/>
<path id="knots" class="knots"/>
<g>
<path d="M374 542l16-5 8 11v16l-12 2-12-1z" fill="#cdcecf" stroke="#a4a4a4"/>
<path d="M374 542l10 10 14-4M384 552l-2 14M390 537l-2 15 10 12M374 542l12-1" fill="none" stroke="#adadad"/>
<path d="M381 567l-7-12" stroke="#228a22" stroke-width="2.500"/><path d="M369 547l7 4-4 4z" fill="#228a22"/>
<path d="M381 567l22-5" stroke="#b02828" stroke-width="2"/><path d="M401 558l9 1-8 5z" fill="#c83030"/>
<path d="M381 567v-20" stroke="#1238b0" stroke-width="4"/>
<circle cx="381" cy="567" r="4" fill="#b8b8b8" stroke="#888"/>
<text x="363" y="549" class="axis" fill="#28a028">Y</text><text x="377" y="545" class="axis" fill="#2050e8">Z</text><text x="411" y="562" class="axis" fill="#d83030">X</text>
</g>
</g>
</svg>
</section>
</main>

<footer class="dock">
<div class="group">
<button class="tool start-tool" aria-label="Find"><svg class="ic half"><use href="#b1"/></svg></button><button class="more" aria-label="More"></button>
<button class="tool" aria-label="View"><svg class="ic"><use href="#b2"/></svg></button>
<button class="tool" aria-label="Window"><svg class="ic"><use href="#b3"/></svg></button>
<button class="tool" aria-label="Add"><svg class="ic"><use href="#b4"/></svg></button><button class="more" aria-label="More"></button>
<button class="tool" aria-label="Move"><svg class="ic"><use href="#b5"/></svg></button>
<button class="tool" aria-label="Constraint"><svg class="ic"><use href="#b6"/></svg></button>
<button class="tool" aria-label="Mate"><svg class="ic"><use href="#b7"/></svg></button>
<i class="sep"></i>
<button class="tool" aria-label="Structure"><svg class="ic"><use href="#b8"/></svg></button>
<button class="tool" aria-label="Part"><svg class="ic"><use href="#b9"/></svg></button>
<button class="tool" aria-label="Boxes"><svg class="ic"><use href="#b10"/></svg></button>
<i class="sep"></i>
<button class="tool" aria-label="Solid"><svg class="ic"><use href="#b11"/></svg></button>
<i class="sep"></i>
<button class="tool" aria-label="Clip"><svg class="ic"><use href="#b12"/></svg></button>
<button class="tool" aria-label="Route"><svg class="ic"><use href="#b13"/></svg></button>
<button class="tool" aria-label="Sheet"><svg class="ic"><use href="#b14"/></svg></button>
<i class="sep"></i>
<button class="tool" aria-label="Interpart"><svg class="ic"><use href="#b15"/></svg></button><button class="more" aria-label="More"></button>
<button class="more slim" aria-label="Options"></button>
</div>
<div class="group grip">
<button class="tool" aria-label="Sketch in task"><svg class="ic"><use href="#k1"/></svg></button>
<button class="finish" disabled><svg class="ic"><use href="#k2"/></svg><span>完成草图</span></button>
<button class="tool" aria-label="Profile"><svg class="ic"><use href="#k3"/></svg></button>
<button class="tool" aria-label="Line"><svg class="ic"><use href="#k4"/></svg></button>
<button class="tool" aria-label="Arc"><svg class="ic"><use href="#k5"/></svg></button>
<button class="tool" aria-label="Circle"><svg class="ic"><use href="#k6"/></svg></button>
<button class="tool" aria-label="Fillet"><svg class="ic"><use href="#k7"/></svg></button>
<button class="tool" aria-label="Corner"><svg class="ic"><use href="#k8"/></svg></button>
<button class="tool" aria-label="Rectangle"><svg class="ic"><use href="#k9"/></svg></button>
<button class="tool" aria-label="Spline"><svg class="ic"><use href="#k10"/></svg></button>
<button class="tool" aria-label="Point"><svg class="ic"><use href="#k11"/></svg></button>
<button class="tool" aria-label="Offset curve"><svg class="ic"><use href="#k12"/></svg></button><button class="more" aria-label="More"></button>
<i class="sep"></i>
<button class="tool" aria-label="Quick trim"><svg class="ic"><use href="#k13"/></svg></button>
<button class="tool" aria-label="Quick extend"><svg class="ic"><use href="#k13"/></svg></button>
<button class="tool" aria-label="Make corner"><svg class="ic"><use href="#k14"/></svg></button>
<i class="sep"></i>
<button class="tool" aria-label="Dimension"><svg class="ic"><use href="#k15"/></svg></button><button class="more" aria-label="More"></button>
<i class="sep"></i>
<button class="tool" aria-label="Constraints"><svg class="ic"><use href="#k16"/></svg></button>
<button class="tool" aria-label="Auto constrain"><svg class="ic"><use href="#k17"/></svg></button>
<button class="tool" aria-label="Parallel"><svg class="ic"><use href="#k18"/></svg></button><button class="more" aria-label="More"></button>
<i class="sep"></i>
<button class="tool" aria-label="Edit box"><svg class="ic"><use href="#k19"/></svg></button>
<button class="tool" aria-label="Edit curve"><svg class="ic"><use href="#k20"/></svg></button>
<button class="tool" aria-label="Edit string"><svg class="ic"><use href="#k20"/></svg></button>
<button class="more" aria-label="More"></button>
</div>
</footer>
<script src="mesh.js"></script>
</body>
</html>
```
FILE: styles.css
```css
* { box-sizing: border-box; }
body { margin: 0; height: 100vh; display: flex; flex-direction: column; overflow: hidden; background: #fff; color: #111; font: 12px/16px "Open Sans", "Noto Sans CJK SC", sans-serif; }
button { border: 0; padding: 0; margin: 0; background: none; color: inherit; font: inherit; }
.sprite { position: absolute; width: 0; height: 0; }
.glyph-i { font: bold 12px "Liberation Serif", serif; text-anchor: middle; fill: #20206a; }
.glyph-w { font: bold 14px "Liberation Serif", serif; text-anchor: middle; fill: #fff; }
.glyph-abc { font: bold 7px "Liberation Sans", sans-serif; text-anchor: middle; fill: #111; }
.gl { fill: none; stroke: #999; stroke-width: 1.5; }

.toolbars { flex: none; border-bottom: 2px solid #8a9096; }
.bar { display: flex; height: 31px; border-bottom: 1px solid #dcdcdc; }
.bar.second { height: 34px; }
.bar.third { height: 31px; border-bottom: 0; }
.group { display: flex; align-items: center; flex: none; border-right: 1px solid #dcdcdc; }
.group.last { border-right: 0; }
.group.wide { flex: 1; border-right: 0; }
.grip::before { content: ""; width: 9px; height: 24px; flex: none; background: repeating-linear-gradient(#aaa 0 2px, #fff 2px 4px) 3px 0 / 3px 100% no-repeat; }
.tool { width: 31px; height: 28px; flex: none; display: grid; place-items: center; }
.ic { width: 24px; height: 24px; display: block; }
.sep { width: 5px; height: 25px; flex: none; background: linear-gradient(#d4d4d4, #d4d4d4) 2px 0 / 1px 100% no-repeat; }
.third .sep, .dock .sep { width: 6px; }
.more { width: 12px; height: 28px; flex: none; display: grid; place-items: center; }
.more::after, .tri { content: ""; width: 5px; height: 3px; background: #111; clip-path: polygon(0 0, 100% 0, 50% 100%); }
.more.narrow { width: 10px; }
.more.over { align-items: end; padding-bottom: 6px; width: 14px; }
.more.over.wide { width: 30px; justify-items: end; align-content: space-between; padding: 0 5px 6px 0; }
.more.over.slim { width: 10px; }
.more.over.end { margin-left: auto; width: 18px; height: 26px; }
.chev { width: 8px; height: 7px; }
.start { width: 64px; height: 28px; display: flex; align-items: center; gap: 4px; padding-left: 2px; font-size: 11px; }
.search { position: relative; width: 125px; margin: 0 3px 0 9px; }
.search input { display: block; width: 100%; height: 20px; border: 1px solid #999; padding: 0 20px 2px 1px; font: 11px/16px "Open Sans", "Noto Sans CJK SC", sans-serif; }
.lens { position: absolute; right: 2px; top: 2px; width: 16px; height: 16px; }
.pick { position: relative; width: 140px; margin: 0 4px 0 7px; flex: none; }
.pick.clipped { width: 133px; margin: 0 0 0 -4px; }
.pick select { appearance: none; display: block; width: 100%; height: 20px; border: 1px solid #999; border-radius: 0; background: #fff; padding: 0 2px; color: #111; font: 11px/16px "Open Sans", "Noto Sans CJK SC", sans-serif; }
.tri.big { position: absolute; right: 5px; top: 9px; width: 7px; height: 4px; }
.mini { width: 23px; height: 24px; flex: none; display: grid; place-items: center; }
.mini .ic { width: 17px; height: 17px; }

.work { flex: 1; min-height: 0; display: flex; }
.rail { width: 23px; flex: none; display: flex; flex-direction: column; overflow: hidden; }
.tabs { background: #dcdcdc; border-right: 1px solid #a8a8a8; border-bottom: 1px solid #a8a8a8; display: flex; flex-direction: column; }
.tabs.on { background: #fff; border: 0; }
.tabs.grow { flex: 1; min-height: 0; border-top: 1px solid #a8a8a8; border-bottom: 0; }
.tab { height: 42px; width: 20px; flex: none; display: flex; align-items: center; justify-content: flex-end; }
.tab svg { width: 24px; height: 24px; flex: none; }
.tab.small { height: 26px; justify-content: center; padding-right: 8px; }
.tab.small svg { width: 15px; height: 15px; }
.tab.first { height: 56px; padding-top: 14px; }
.tab.library { height: 48px; padding-bottom: 6px; }
.tab.tall { height: 54px; }
.tab.low { height: 34px; }
.arrows { width: 12px; height: 62px; flex: none; }

.panel { width: 314px; flex: none; display: flex; flex-direction: column; border-right: 2px solid #8a9096; padding: 0 9px 6px 6px; }
.panel-head { height: 28px; flex: none; display: flex; align-items: center; justify-content: space-between; padding: 0 6px 0 4px; }
h1 { margin: 0; font: inherit; }
.max { width: 12px; height: 11px; border: 1px solid #111; border-top-width: 2px; }
.frame { flex: 1; min-height: 0; display: flex; flex-direction: column; border: 1px solid #ccc; padding: 1px; }
.rows { flex: 1; min-height: 0; overflow: hidden; }
.tree { width: 100%; border-collapse: separate; border-spacing: 0; table-layout: fixed; }
.tree th { height: 20px; padding: 0 6px; background: #efefef; border-right: 1px solid #ccc; border-bottom: 1px solid #ccc; font-weight: normal; text-align: left; }
.tree th:first-child { width: 200px; }
.tree td { height: 20px; padding: 0 4px; border-right: 1px solid #e6e6e6; border-bottom: 1px solid #e6e6e6; line-height: 18px; }
.tree td:first-child { padding: 0; }
.tree th:last-child, .tree td:last-child { border-right: 0; }
.tree tr:nth-child(even) td { background: #fafafa; }
.up { display: inline-block; width: 9px; height: 5px; margin-left: 18px; background: #111; clip-path: polygon(50% 0, 100% 100%, 0 100%); vertical-align: 2px; }
.node { display: flex; align-items: center; gap: 2px; height: 19px; white-space: nowrap; }
.node svg { width: 16px; height: 16px; flex: none; }
.node.sub { padding-left: 19px; }
.twist { position: relative; width: 17px; height: 20px; flex: none; display: grid; place-items: center; padding-left: 1px; }
.twist::before { content: ""; position: absolute; left: 9px; top: 0; bottom: 0; border-left: 1px dotted #999; }
.twist::after { content: ""; position: absolute; left: 10px; right: 0; top: 10px; border-top: 1px dotted #999; }
.twist.from::before { top: 10px; }
.twist.to::before { bottom: 10px; }
.twist button { position: relative; z-index: 1; width: 9px; height: 9px; border: 1px solid #ccc; background: linear-gradient(#111, #111) center / 5px 1px no-repeat #fff; }
.twist .plus { background: linear-gradient(#111, #111) center / 5px 1px no-repeat, linear-gradient(#111, #111) center / 1px 5px no-repeat #fff; }
.node input { appearance: none; width: 13px; height: 13px; margin: 0 0 0 1px; border: 1px solid #111; background: #fff; flex: none; }
.node input:checked::before { content: ""; display: block; width: 11px; height: 11px; background: #16b02c; clip-path: polygon(0 50%, 18% 38%, 36% 58%, 84% 4%, 100% 14%, 40% 98%); }
.node label { padding-left: 1px; }
.dim td { color: #999; }
.bold td { font-weight: bold; }
.scroll { height: 17px; flex: none; display: flex; align-items: center; background: #efefef; }
.scroll button { width: 18px; height: 16px; flex: none; display: grid; place-items: center; }
.scroll button::after { content: ""; width: 4px; height: 7px; background: #222; clip-path: polygon(100% 0, 100% 100%, 0 50%); }
.scroll .right::after { clip-path: polygon(0 0, 100% 50%, 0 100%); }
.track { flex: 1; }
.thumb { width: 58%; height: 15px; border: 1px solid #999; border-radius: 1px; background: linear-gradient(#f6f6f6, #e2e2e2 45%, #cfcfcf 50%, #dcdcdc); display: flex; align-items: center; justify-content: center; gap: 2px; }
.thumb i { width: 1px; height: 7px; background: #444; }
.foot { height: 5px; flex: none; background: #dcdcdc; border: 1px solid #aaa; }

.view { flex: 1; min-width: 0; background: linear-gradient(#b4b5b6, #c6c6c8 24%, #d7d8d9 52%, #e4e6e7 82%, #e7e9ea); }
.scene { display: block; width: 100%; height: 100%; }
.mesh { fill: none; stroke: #ffb600; stroke-width: 1.3; shape-rendering: crispEdges; }
.mesh-dark { fill: none; stroke: #a06000; stroke-width: 1; stroke-dasharray: 1 3; shape-rendering: crispEdges; }
.mesh-dark.faint { stroke: #f09a00; }
.mesh-edge { fill: none; stroke: #5a3c08; stroke-width: 1; stroke-dasharray: 2 2; shape-rendering: crispEdges; }
.knots { fill: #222; }
.axis { font: 12px "Liberation Sans", sans-serif; }

.dock { flex: none; height: 15px; overflow: hidden; display: flex; align-items: flex-start; border-top: 1px solid #f4f4f4; background: #fff; }
.dock .group { height: 33px; }
.dock .start-tool { width: 28px; justify-items: start; padding-left: 2px; }
.dock .ic.half { width: 18px; }
.dock .slim { width: 12px; }
.finish { display: flex; align-items: center; gap: 4px; width: 76px; padding-left: 2px; flex: none; color: #bbb; font-size: 11px; }
```
FILE: mesh.js
```js
// Builds the wireframe lattice between four corner points.
const corners = { a: [538, 348], b: [963, 228], c: [1093, 447], d: [670, 567] };
const across = 39;
const down = 30;

function at(u, v) {
  return [0, 1].map(function (k) {
    const top = corners.a[k] + (corners.b[k] - corners.a[k]) * u;
    const low = corners.d[k] + (corners.c[k] - corners.d[k]) * u;
    return Math.round((top + (low - top) * v) * 10) / 10;
  });
}

function segment(p, q) {
  return 'M' + p.join(' ') + 'L' + q.join(' ');
}

let rows = '';
let cols = '';
let knots = '';
for (let i = 0; i <= down; i++) rows += segment(at(0, i / down), at(1, i / down));
for (let j = 0; j <= across; j++) cols += segment(at(j / across, 0), at(j / across, 1));
function knot(p) {
  knots += 'M' + (Math.round(p[0]) - 1) + ' ' + (Math.round(p[1]) - 1) + 'h2v2h-2z';
}
for (let j = 0; j <= across; j++) { knot(at(j / across, 0)); knot(at(j / across, 1)); }
for (let i = 0; i <= down; i += 2) { knot(at(0, i / down)); knot(at(1, i / down)); }

document.getElementById('rows').setAttribute('d', rows);
document.getElementById('rowdash').setAttribute('d', rows);
document.getElementById('cols').setAttribute('d', cols);
document.getElementById('coldash').setAttribute('d', cols);
document.getElementById('knots').setAttribute('d', knots);
```
